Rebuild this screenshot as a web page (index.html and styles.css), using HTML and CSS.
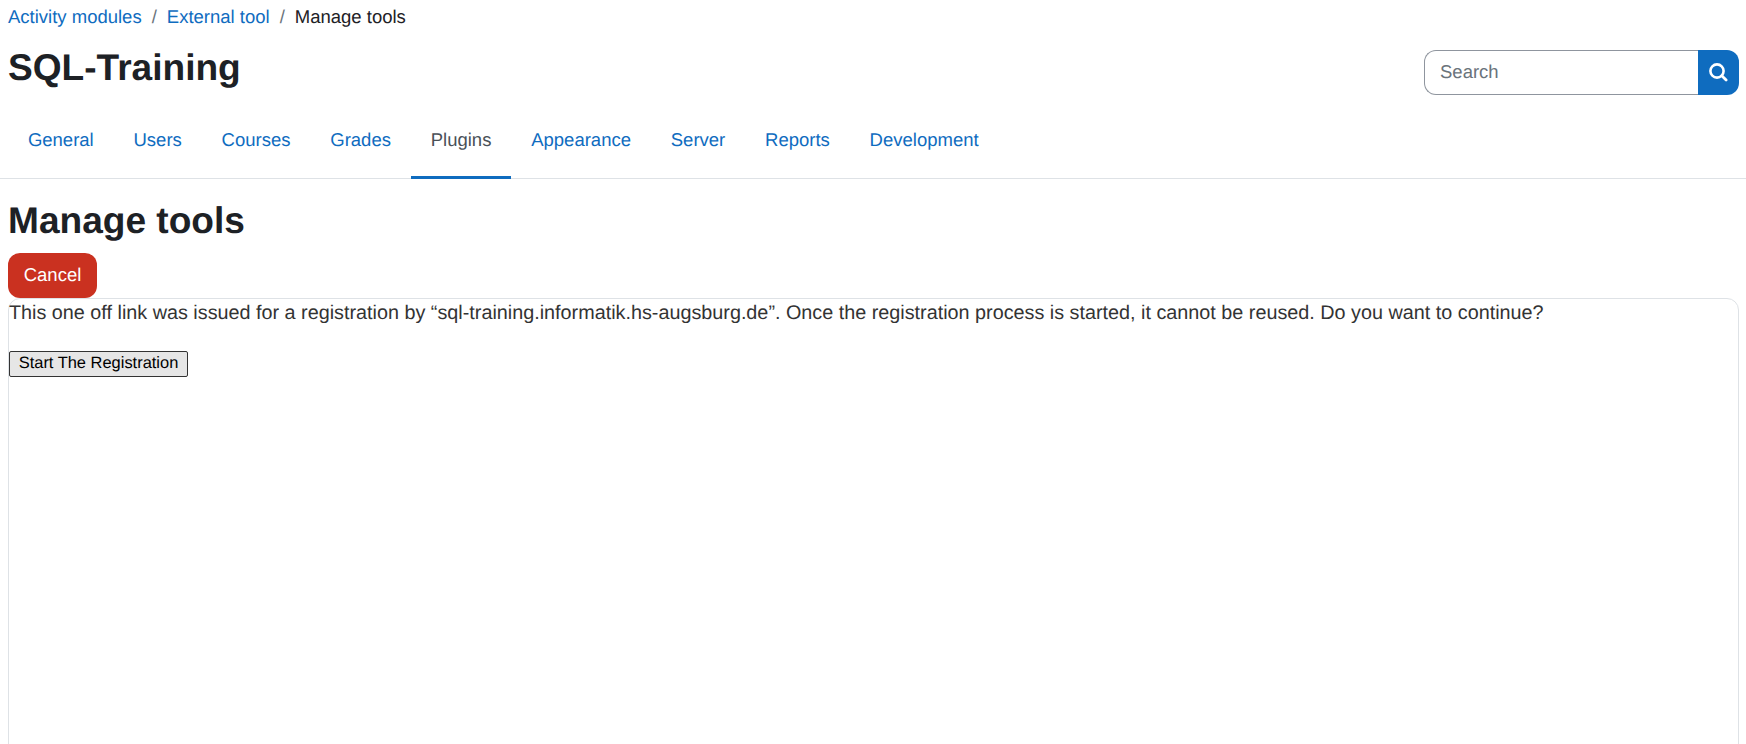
FILE: index.html
```html
<!DOCTYPE html>
<html lang="en">
<head>
<meta charset="utf-8">
<title>Manage tools</title>
<link rel="stylesheet" href="styles.css">
</head>
<body>
<nav class="crumbs">
  <a href="#">Activity modules</a><span class="sep">/</span><a href="#">External tool</a><span class="sep">/</span><span class="current">Manage tools</span>
</nav>
<header class="head">
  <h1 class="site">SQL-Training</h1>
  <form class="search">
    <input class="search-input" type="text" placeholder="Search">
    <button class="search-btn" type="button" aria-label="Search">
      <svg width="19" height="19" viewBox="0 0 19 19" fill="none" stroke="#fff"><circle cx="8" cy="8" r="6.6" stroke-width="2.6"/><path d="M12.8 12.8 17.1 17.1" stroke-width="2.8" stroke-linecap="round"/></svg>
    </button>
  </form>
</header>
<ul class="tabs">
  <li><a class="tab" href="#">General</a></li>
  <li><a class="tab" href="#">Users</a></li>
  <li><a class="tab" href="#">Courses</a></li>
  <li><a class="tab" href="#">Grades</a></li>
  <li><a class="tab active" href="#">Plugins</a></li>
  <li><a class="tab" href="#">Appearance</a></li>
  <li><a class="tab" href="#">Server</a></li>
  <li><a class="tab" href="#">Reports</a></li>
  <li><a class="tab" href="#">Development</a></li>
</ul>
<main class="main">
  <h2 class="title">Manage tools</h2>
  <a class="cancel" href="#">Cancel</a>
  <section class="frame">
    <p class="msg">This one off link was issued for a registration by “sql-training.informatik.hs-augsburg.de”. Once the registration process is started, it cannot be reused. Do you want to continue?</p>
    <button class="start" type="button">Start The Registration</button>
  </section>
</main>
</body>
</html>
```
FILE: styles.css
```css
* { box-sizing: border-box; }
html, body { height: 744px; overflow: hidden; }
body {
  margin: 0;
  background: #fff;
  color: #1d2125;
  font-family: "Liberation Sans", Arial, sans-serif;
  font-size: 18.5px;
  line-height: 1.5;
  text-rendering: geometricPrecision;
}
a { color: #0f6cbf; text-decoration: none; }
.crumbs { padding: 3px 8px 0; height: 34px; line-height: 28px; white-space: nowrap; }
.sep { color: #6a737b; padding: 0 10px; }
.current { color: #1d2125; }
.head { display: flex; justify-content: space-between; padding: 11px 7px 0 8px; height: 72px; }
.site { margin: 0; font-size: 37.1px; line-height: 45px; font-weight: 700; }
.search { display: flex; height: 45px; margin-top: 5px; width: 315px; }
.search-input {
  flex: 1; min-width: 0; height: 45px; padding: 0 15px 2px;
  border: 1px solid #8f959e; border-right: 0; border-radius: 12px 0 0 12px;
  font: inherit; color: #1d2125; outline: 0; text-rendering: geometricPrecision;
}
.search-input::placeholder { color: #6a737b; opacity: 1; }
.search-btn {
  width: 41px; height: 45px; padding: 0; border: 0; border-radius: 0 12px 12px 0;
  background: #0f6cbf; display: flex; align-items: center; justify-content: center;
}
.tabs { display: flex; list-style: none; margin: 0; padding: 0 8px; height: 73px; border-bottom: 1px solid #dee2e6; }
.tab { display: block; height: 73px; padding: 0 19.9px; line-height: 68px; border-bottom: 3px solid transparent; }
.tab.active { color: #495057; border-bottom-color: #0f6cbf; }
.main { padding: 0 7px 0 8px; }
.title { margin: 0; padding-top: 19px; font-size: 37.1px; line-height: 45px; font-weight: 700; }
.cancel {
  display: block; width: 89px; height: 45px; margin-top: 10px; border-radius: 12px;
  background: #ca3120; color: #fff; text-align: center; line-height: 44px;
}
.frame { height: 520px; border: 1px solid #dee2e6; border-radius: 12px; }
.msg { margin: 0 0 25px; color: #333; font-size: 19.8px; line-height: 28px; height: 27px; }
.start {
  display: block; height: 26px; width: 179px; padding: 0 0 1px; margin: 0;
  border: 1px solid #333; border-radius: 2px; background: #e6e6e6; color: #000;
  font: 16.45px/1 "Liberation Sans", Arial, sans-serif; text-rendering: geometricPrecision;
}
```
